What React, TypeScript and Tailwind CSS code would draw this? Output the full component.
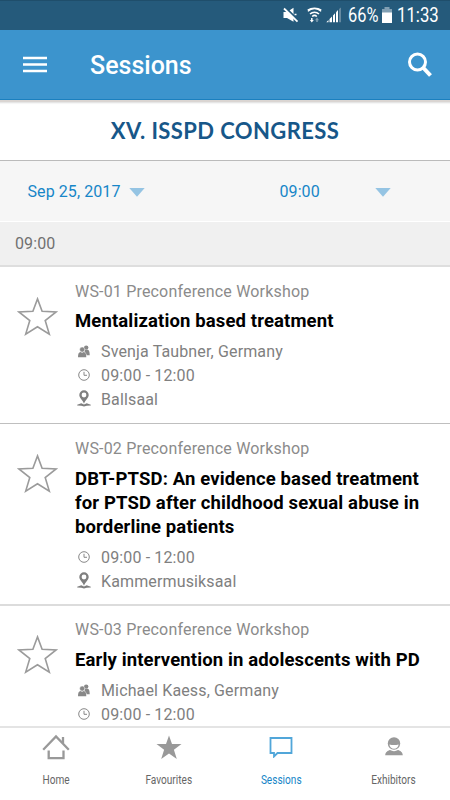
import React from 'react';

type Session = { code: string; title: string[]; speaker?: string; time: string; room?: string; titleGap: string; metaGap: string; frame: string };

const sessions: Session[] = [
  { code: 'WS-01 Preconference Workshop', title: ['Mentalization based treatment'], speaker: 'Svenja Taubner, Germany', time: '09:00 - 12:00', room: 'Ballsaal', titleGap: 'mt-[5px]', metaGap: 'mt-[7.500px]', frame: 'h-[157px] pt-[13px] border-b border-[#bfbfbf]' },
  { code: 'WS-02 Preconference Workshop', title: ['DBT-PTSD: An evidence based treatment', 'for PTSD after childhood sexual abuse in', 'borderline patients'], time: '09:00 - 12:00', room: 'Kammermusiksaal', titleGap: 'mt-[6px]', metaGap: 'mt-[7px]', frame: 'h-[182px] pt-[13px] border-b-2 border-[#dcdcdc]' },
  { code: 'WS-03 Preconference Workshop', title: ['Early intervention in adolescents with PD'], speaker: 'Michael Kaess, Germany', time: '09:00 - 12:00', titleGap: 'mt-[6px]', metaGap: 'mt-[7px]', frame: 'h-[140px] pt-[12px]' },
];

const People = () => (
  <svg className="-mt-[1px] -ml-[1px]" width="12" height="13" viewBox="0 0 12 13" fill="#888">
    <circle cx="8.200" cy="2.600" r="2.200" />
    <path d="M7 4.800h2.400c1.500 0 2.300 1.500 2.300 5.500H8.600C8.400 8.300 7.500 7.500 6.500 7z" />
    <circle cx="4.200" cy="4.600" r="2.500" stroke="#fff" strokeWidth=".4" />
    <path d="M0 12.300C0 8.600.9 7.200 2.400 7l1.700.7L5.800 7c1.600.2 2.500 1.600 2.500 5.300z" />
  </svg>
);
const Clock = () => (
  <svg className="-mt-[2px] -ml-[1px]" width="12" height="12" viewBox="0 0 12 12" fill="none" stroke="#888" strokeWidth="1">
    <circle cx="6" cy="6" r="5.300" />
    <path d="M6 2.800V6.300h3" />
  </svg>
);
const Pin = () => (
  <svg className="-mt-[2px] -ml-[1px]" width="14" height="17" viewBox="0 0 14 17" fill="#7f7f7f">
    <path fillRule="evenodd" d="M7 .3a4.700 4.700 0 0 1 4.700 4.700C11.700 8 8.500 9.500 7 13.800 5.500 9.500 2.300 8 2.300 5A4.700 4.700 0 0 1 7 .3zm0 2.300a2.400 2.400 0 1 0 0 4.800 2.400 2.400 0 0 0 0-4.800z" />
    <path d="m4.300 13.300 2.700 1.200 2.700-1.200 4.100 1.500v.8l-4 .1L7 16.500l-2.800-.8-4-.1v-.8z" />
  </svg>
);
const StarOutline = () => (
  <svg width="41" height="39" viewBox="0 0 40 39" fill="none" stroke="#9b9b9b" strokeWidth="1.600">
    <path d="M20 1.900 24.600 14.200 38.600 15 27.700 23.500 31.800 37.100 20 29.700 8.200 37.100 12.300 23.500 1.400 15l14-.8z" />
  </svg>
);
const Caret = () => <svg className="mt-[2px]" width="16" height="9" viewBox="0 0 16 9"><path d="M.3 0h15.400L8 8.700z" fill="#95c4e3" /></svg>;

function Meta({ icon, text }: { icon: React.ReactNode; text: string }) {
  return (
    <div className="flex h-[23.700px] items-center">
      <span className="flex w-[19px] shrink-0 items-center justify-center">{icon}</span>
      <span className="ml-[7px] text-[16px] leading-[24px] tracking-[.14px] whitespace-nowrap text-[#808080]">{text}</span>
    </div>
  );
}

function StatusBar() {
  return (
    <div className="flex h-[30px] shrink-0 items-center border-t border-[#1f4e6b] bg-[#255a7b] text-white">
      <svg className="-mt-[2px] ml-[283px]" width="16" height="16" viewBox="0 0 16 16">
        <path d="M.5 5H4l6.500-4.300v14L4 11H.5z" fill="#fff" />
        <path d="M2.500 1 15.500 14" stroke="#255a7b" strokeWidth="2.500" />
        <path d="M1 1.500 14.500 14.700" stroke="#fff" strokeWidth="1.800" />
        <path d="M11.500 7.500h2" stroke="#fff" strokeWidth="1.500" />
      </svg>
      <svg className="-mt-[1px] ml-[8px]" width="15" height="18" viewBox="0 0 15 18" fill="none" stroke="#fff" strokeWidth="1.500">
        <path d="M.8 5.300a9.500 9.500 0 0 1 13.400 0M3 8a6.500 6.500 0 0 1 9 0M5.200 10.500a3.300 3.300 0 0 1 4.600 0M.8 4.200a10 8 0 0 1 13.400 0" />
        <path d="M4.800 12v2.500" /><path d="m2.800 14 2 2.500 2-2.500z" fill="#fff" stroke="none" />
        <path d="M10 13v3" stroke="#80a0b3" /><path d="m8 14.200 2-2.700 2 2.700z" fill="#80a0b3" stroke="none" />
      </svg>
      <svg className="-mt-[1px] ml-[4px]" width="16" height="16" viewBox="0 0 16 16" fill="#fff">
        <path d="M.3 15.200 2.500 13v2.200zM3.500 12 6 9.500v5.700H3.500zM7 8.500 9 6.300v8.900H7z" /><path d="M10 5.300 12 3v12.200h-2z" /><path d="M13 2 15 .5v14.700h-2z" fill="#6689a0" />
      </svg>
      <span className="ml-[5.500px] w-[30px] origin-left scale-x-[.84] text-[19.500px] leading-none whitespace-nowrap">66%</span>
      <svg className="-mt-[1px] ml-[4.500px]" width="10" height="16" viewBox="0 0 10 16">
        <path d="M2.500 0h5v2H10v4H0V2h2.500z" fill="#819fb3" /><path d="M0 5.500h10V16H0z" fill="#fff" />
      </svg>
      <span className="ml-[4.500px] origin-left scale-x-[.86] text-[19.500px] leading-none">11:33</span>
    </div>
  );
}

function Tab({ icon, label, active = false }: { icon: React.ReactNode; label: string; active?: boolean }) {
  return (
    <div className={`flex flex-1 flex-col items-center ${active ? 'text-[#1685c7]' : 'text-[#666]'}`}>
      <div className="mt-[3px] flex h-[32px] items-center justify-center">{icon}</div>
      <span className="mt-[9px] scale-x-[.84] text-[12px] leading-[16px] whitespace-nowrap">{label}</span>
    </div>
  );
}

export default function App() {
  return (
    <div className="flex h-[800px] w-[450px] flex-col overflow-hidden bg-white font-['Roboto',sans-serif]">
      <StatusBar />
      <header className="flex h-[70px] shrink-0 items-center border-b border-[#1b80bf] bg-[#3c94cd]">
        <svg className="ml-[23px]" width="24" height="17" viewBox="0 0 24 17" fill="none" stroke="#fff" strokeWidth="2.600">
          <path d="M0 2h24M0 8.500h24M0 15h24" />
        </svg>
        <h1 className="ml-[43px] pt-[3px] text-[25px] leading-[30px] font-medium text-white">Sessions</h1>
        <svg className="mr-[17px] ml-auto" width="26" height="26" viewBox="0 0 26 26" fill="none" stroke="#fff">
          <circle cx="10.500" cy="10" r="8" strokeWidth="3" /><path d="m16 15.500 7.500 8" strokeWidth="4" />
        </svg>
      </header>
      <div className="flex h-[61px] shrink-0 items-center justify-center border-t-2 border-b border-t-[#dad5d2] border-b-[#bbb] bg-white shadow-[inset_0_3px_2px_-2px_#ddd]">
        <span className="font-['Lato',sans-serif] text-[22px] leading-[30px] font-bold tracking-[.4px] whitespace-nowrap text-[#175789]">XV. ISSPD CONGRESS</span>
      </div>
      <div className="flex h-[61px] shrink-0 items-center border-b border-white bg-[#f6f6f6] text-[16px] text-[#1786c8]">
        <span className="mt-[2px] ml-[27.500px] w-[101.500px] tracking-[.08px] whitespace-nowrap">Sep 25, 2017</span>
        <Caret />
        <span className="mt-[2px] ml-[134.500px] w-[95.500px] tracking-[.08px]">09:00</span>
        <Caret />
      </div>
      <div className="flex h-[45px] shrink-0 items-center border-b-2 border-[#dedede] bg-[#f0f0f0] pl-[15px] text-[16px] tracking-[.12px] text-[#707070]">09:00</div>
      <main className="h-[459px] shrink-0 overflow-hidden">
        {sessions.map((s) => (
          <article key={s.code} className={`flex ${s.frame}`}>
            <div className="w-[75px] shrink-0 pt-[17px] pl-[17px]"><StarOutline /></div>
            <div>
              <div className="text-[16px] leading-[24px] tracking-[.18px] whitespace-nowrap text-[#8b8b8b]">{s.code}</div>
              <h2 className={`text-[18.500px] leading-[24px] font-bold tracking-[.13px] text-black ${s.titleGap}`}>
                {s.title.map((line) => <span key={line} className="block whitespace-nowrap">{line}</span>)}
              </h2>
              <div className={s.metaGap}>
                {s.speaker && <Meta icon={<People />} text={s.speaker} />}
                <Meta icon={<Clock />} text={s.time} />
                {s.room && <Meta icon={<Pin />} text={s.room} />}
              </div>
            </div>
          </article>
        ))}
      </main>
      <nav className="flex h-[75px] shrink-0 border-t-2 border-[#e4e4e4] bg-white">
        <Tab label="Home" icon={<svg width="28" height="26" viewBox="0 0 28 26" fill="none" stroke="#999" strokeWidth="2.300"><path d="M1.200 15.700 14 2.500l12.800 13.200M21 10V3" /><path d="M6.700 16.500v7.700h14.800v-7.700" /></svg>} />
        <Tab label="Favourites" icon={<svg width="26" height="25" viewBox="0 0 26 25" fill="#999"><path d="m13 .5 3 8.500 9.500.1-7.600 5.700 2.900 9.200-7.800-5.500L5.200 24l2.900-9.200L.5 9.100 10 9z" /></svg>} />
        <Tab active label="Sessions" icon={<svg width="24" height="22" viewBox="0 0 24 22" fill="none" stroke="#51a6d9" strokeWidth="1.800"><path d="M1.500 2h21v15H8.500L5 20.500V17H1.500z" /></svg>} />
        <Tab label="Exhibitors" icon={<svg className="-mt-[2px]" width="20" height="20" viewBox="0 0 20 20" fill="#999"><circle cx="10" cy="7.500" r="6.200" /><path d="M5.400 8.500q4.600 1.200 9.200 0c-.3 2.700-2 4.200-4.600 4.200S5.700 11.200 5.400 8.500z" fill="#fff" /><path d="M1.200 19.300c.4-3.500 2.500-4.500 4.800-5.300 2.500 1.500 5.500 1.500 8 0 2.300.8 4.400 1.800 4.800 5.300z" /></svg>} />
      </nav>
    </div>
  );
}
